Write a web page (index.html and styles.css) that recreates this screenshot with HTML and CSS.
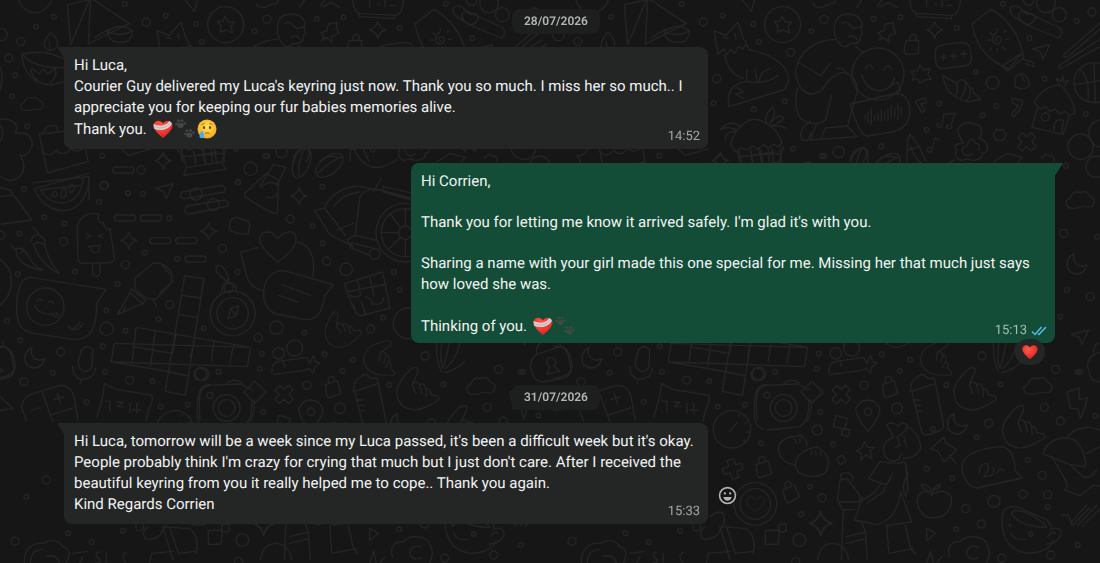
FILE: index.html
```html
<!DOCTYPE html>
<html lang="en">

<head>
    <meta charset="UTF-8">
    <meta name="viewport" content="width=device-width, initial-scale=1.0">
    <title>Chat</title>
    <link rel="stylesheet" href="styles.css">
</head>

<body>
    <!-- doodle wallpaper, one tile repeated sideways -->
    <svg class="wallpaper" aria-hidden="true">
        <defs>
            <path id="spark" d="M0-25Q5-5 24 0Q5 5 0 25Q-5 5-24 0Q-5-5 0-25Z" />
            <path id="cross" d="M-12-28L0-16L14-28L27-15L15-1L28 13L15 27L0 14L-14 27L-27 14L-14 0L-27-14Z" />
            <path id="lock" d="M-22-10L14-22L25 16L-8 29Q-16 30-18 20ZM-12-14Q-18-34-4-35Q6-35 5-19" />
            <path id="hand" d="M-60 10C-62-20-20-62-8-65Q8-66 2-50L-14-15Q-4-30 8-14Q22-22 27-1Q40-5 42 16L62 20Q74 30 56 38L30 52C-10 72-58 60-60 10ZM-14-15L-4 12M8-14L14 12M27-1L28 22" />
            <path id="moon" d="M-8-30C-42-10-34 30 0 32Q24 30 30 5Q8 14-4 0Q-14-12-8-30Z" />
            <path id="plane" d="M-27-7L25-20L5 24L-3 2Z" />
            <path id="cloud" d="M-36 22Q-52 4-30-6Q-24-30 2-22Q18-32 28-12Q52-2 36 18Q22 24 8 18Q-12 30-36 22Z" />
            <path id="heart" d="M0 32Q-54-2-30-28Q-12-38 0-16Q16-38 36-26Q50 2 0 32Z" />
            <path id="ring" d="M0-12A12 12 0 1 1 0 12A12 12 0 1 1 0-12" />
            <path id="dot" d="M0-7A7 7 0 1 1 0 7A7 7 0 1 1 0-7" />
            <path id="dash" d="M-23-9H23Q32-9 32 0T23 9H-23Q-32 9-32 0T-23-9Z" />
            <g id="doodles">
                <!-- top left -->
                <g transform="scale(.3333)">
                    <circle cx="105" cy="-12" r="50" />
                    <path d="M202 14L278-2L388 70L265 132L272-2M202 14L212 134L268 0M285 112L325 88" />
                    <path d="M322 94Q360 66 397 92Q396 130 358 127Q326 126 322 94ZM322 94Q360 114 397 92" />
                    <path d="M152 97C126 128 126 146 150 152C182 146 178 120 152 97ZM150 152L148 126" />
                    <path d="M66 162Q140 145 200 182M66 162C66 220 110 258 160 254L196 244M66 162Q110 210 196 202M110 240Q86 210 96 206L118 222Q130 196 142 222L166 206Q174 230 150 248" />
                    <use href="#cloud" x="95" y="315" transform="translate(20 60) scale(.8)" />
                    <path d="M-10 360C30 350 60 370 46 400C90 390 108 430 90 450C80 466 66 470 60 465C82 500 70 530 40 540C20 545 0 530-8 520" />
                    <path d="M130 398L142 378L168 376L176 398L200 390M118 402L248 388L264 485L142 519ZM126 452Q150 478 170 450Q190 474 212 446Q236 464 258 436" />
                    <path d="M100 548L266 530L268 600M120 570L240 556" />
                    <path d="M545 452L560 502L666 486L680 440M560 502L552 526L676 508L666 486M580 450L588 498M612 450L618 494M644 446L650 490M548 470L672 460M365 448L385 466L455 446" />
                    <ellipse cx="905" cy="488" rx="24" ry="48" transform="rotate(22 905 488)" />
                    <ellipse cx="988" cy="496" rx="26" ry="48" transform="rotate(52 988 496)" />
                    <path d="M915 445Q890 485 898 530M1025 470Q990 485 952 520M780 560L820 494L858 502L830 556M1060 440Q1100 540 1190 480" />
                    <use href="#spark" x="490" y="482" />
                    <use href="#dash" x="370" y="510" />
                    <use href="#ring" x="423" y="510" />
                    <use href="#ring" x="313" y="556" />
                    <circle cx="752" cy="506" r="20" />
                    <use href="#dot" x="802" y="468" />
                    <use href="#dot" x="714" y="547" />
                    <use href="#dot" x="307" y="467" />
                    <use href="#ring" x="62" y="125" />
                    <use href="#ring" x="26" y="174" />
                    <use href="#dot" x="108" y="80" />
                    <use href="#dot" x="162" y="50" />
                    <use href="#dot" x="46" y="226" />
                    <use href="#dot" x="36" y="289" />
                    <use href="#dot" x="82" y="379" />
                    <use href="#dot" x="374" y="12" />
                    <circle cx="4" cy="104" r="18" />
                    <path d="M-10 180Q20 230-4 280" />
                </g>

                <!-- top right -->
                <g transform="translate(143 0) scale(.3333)">
                    <path d="M54 162L42 92L78 106L114 66L128 112L146 144Q136 128 128 148L116 140L104 160L92 148L80 164L72 146ZM70 112L84 116M104 100L108 116" />
                    <path d="M74 164Q82 220 130 236M146 148C250 170 290 230 250 270L86 320C80 270 100 250 140 244Q200 256 234 226M140 212V242M165 208L172 246M178 246Q178 214 210 206M112 262L130 276L106 282L132 296" />
                    <circle cx="248" cy="74" r="54" />
                    <path d="M246 48L256 66L274 66L264 80L268 98L250 90L232 96L234 78L224 64L240 64Z" />
                    <path d="M120-10L154 34L166-8M340 10Q340 24 366 22Q390 10 402 10L410-8M470 22L490-8M532 18L550-6M540 20L566 8L590 22" />
                    <!-- man with the smiley -->
                    <path d="M406 110C396 70 410 40 446 42C484 44 490 70 484 88L488 102Q478 106 480 120Q470 134 450 130C436 150 420 140 406 110ZM426 70Q440 60 450 76T482 80M444 112Q460 100 470 118" />
                    <path d="M404 118C350 120 310 150 294 186L362 228L390 190M294 186C280 220 290 270 330 282C380 280 376 238 400 230C440 196 480 240 470 280L442 380M410 206Q430 200 442 224M466 138L490 158M292 264C280 330 290 370 350 372L376 362L394 286M350 372L330 420L472 410L442 378L376 384L362 418M332 366C310 372 296 400 306 420L322 422L334 396" />
                    <circle cx="534" cy="222" r="78" />
                    <path d="M496 206Q506 184 518 204M552 210Q566 184 574 208M484 222Q500 272 540 272Q576 268 584 232M566 262L592 246L602 270L588 284" />
                    <path d="M450 312L580 282C620 276 634 310 628 350C620 390 590 396 500 408C480 404 466 360 450 312ZM496 344V358M504 336V368M514 326V374M524 346V362M534 340V360M544 330V362M554 336V356M564 326V360M574 318V354M584 324V350M594 312V358M604 320V344" />
                    <!-- hut and palms -->
                    <path d="M92 436C100 390 140 350 176 360Q232 380 246 430L232 440L222 432L206 444L190 434L172 448L158 438L140 450L122 444L108 456ZM112 456L120 486M240 436L244 486M152 452L158 486M154 466L222 456M178 448L184 484M204 446L208 484M120 378Q90 356 62 388Q90 376 112 392Q72 396 76 420M200 374Q190 340 220 322Q230 340 208 374Q232 340 252 352Q236 372 212 378Q250 376 258 386" />
                    <path d="M46 476L60 460L78 484M450 486Q456 440 494 446Q506 466 490 486M530 486Q550 460 592 474M620 484L624 420L630 402L646 424L658 440L678 484M626 450L658 440" />
                    <!-- clock, pin, lock, shells -->
                    <path d="M630-10Q628 36 650 40L756 46Q780 44 782-8M646 40L650 50L754 56L756 46M680-4V20M706 14H710M726-4V20M740 16H756" />
                    <path d="M534 98L552 92L556 72L582 68L580 88L588 98L566 110L568 128L550 112L536 122L542 106Z" />
                    <use href="#spark" x="704" y="90" />
                    <use href="#lock" transform="translate(636 138) rotate(18)" />
                    <path d="M712 140Q740 130 790 128Q808 128 812 150L814 182Q812 196 790 198L730 206Q712 206 708 190Q702 150 712 140ZM722 172H740M731 163V181M752 168H770M761 159V177M782 162H800M791 153V171" />
                    <path d="M634 214L652 212L660 194L670 210L690 206L684 224L694 238L674 240L660 250L652 236L636 240L642 226Z" />
                    <path d="M728 226L770 250Q776 280 764 288Q738 276 728 226ZM770 250Q780 232 796 244L808 262Q820 262 820 276L842 298L820 302Q800 312 764 288M796 244Q800 276 782 294M810 262Q816 286 800 302" />
                    <path d="M816 72L872 28C920 50 960 110 968 158L926 206C880 190 828 150 816 72ZM906 198L966 160L972 172L924 214ZM968 178L1000 186L1002 200L976 190" />
                    <path d="M892 122Q884 118 890 110Q906 108 904 122Q894 140 880 126Q874 104 890 98M892 86V92M864 120H872M916 118H926M876 144L870 150M910 142L918 150M892 146V154M870 98L876 104M912 98L918 92" />
                    <path d="M932 22Q950 10 966 30L1080 84Q1092 100 1076 114L1000 84L944 52Q926 40 932 22ZM982 76Q950 60 958 40Q974 30 982 44Q1000 34 1006 54Q1000 70 982 76" />
                    <circle cx="1038" cy="10" r="28" />
                    <circle cx="1078" cy="44" r="21" />
                    <circle cx="986" cy="0" r="16" />
                    <use href="#plane" x="1024" y="154" />
                    <path d="M1078 196L1196 120M1078 196Q1072 206 1086 204L1210 134M1090 166L1200 68M1090 166Q1092 176 1106 168L1204 84" />
                    <circle cx="1182" cy="248" r="60" />
                    <path d="M1140 208Q1170 230 1164 302M1124 254L1240 236M1182 188L1186 308" />
                    <path d="M1002 306Q1040 250 1084 256Q1124 300 1124 340L1108 346L1096 334L1080 342L1066 328L1050 334L1038 320L1020 326ZM1012 324L996 382L1090 404L1108 348M1062 392Q1060 350 1090 362L1086 398M1078 256L1068 234L1084 244L1088 228L1092 246L1106 240L1094 258" />
                    <circle cx="1036" cy="351" r="12" />
                    <path d="M946 260L944 236Q956 216 974 224Q988 236 988 258Q968 274 946 260ZM962 222L974 244M646 304L676 294L680 308L662 312L676 330L666 338ZM936 296L966 300Q974 314 942 350L934 344L954 316L938 310Z" />
                    <path d="M732 342L764 340L754 376M732 342L726 374M718 370a8 6 0 1 0 8 4M746 374a8 6 0 1 0 8 2M704 414L696 450M704 414L718 420M690 444a7 6 0 1 0 6 6" />
                    <path d="M774 400C770 376 800 360 816 372C850 370 850 400 836 414C870 424 870 460 846 460C850 480 820 486 800 476C776 490 760 470 770 450C756 430 780 430 790 430ZM800 440Q812 400 826 430Q844 430 836 450M800 440Q780 440 790 460Q800 474 816 462M880 404L890 388L910 390L918 406L908 422L888 420Z" />
                    <use href="#cross" x="980" y="426" />
                    <path d="M880 486L922 460L966 472L956 486M1024 474Q1040 456 1046 468Q1066 466 1062 484" />
                    <circle cx="1142" cy="440" r="38" />
                    <circle cx="1208" cy="400" r="42" />
                    <circle cx="1190" cy="500" r="32" />
                    <circle cx="878" cy="248" r="19" />
                    <circle cx="416" cy="456" r="17" />
                    <use href="#ring" x="272" y="157" />
                    <use href="#ring" x="372" y="58" />
                    <use href="#ring" x="50" y="236" />
                    <use href="#ring" x="10" y="66" />
                    <use href="#ring" x="1176" y="36" />
                    <use href="#dot" x="68" y="47" />
                    <use href="#dot" x="160" y="72" />
                    <use href="#dot" x="177" y="126" />
                    <use href="#dot" x="334" y="94" />
                    <use href="#dot" x="521" y="57" />
                    <use href="#dot" x="602" y="52" />
                    <use href="#dot" x="770" y="84" />
                    <use href="#dot" x="909" y="11" />
                    <use href="#dot" x="988" y="114" />
                    <use href="#dot" x="1130" y="63" />
                    <use href="#dot" x="828" y="216" />
                    <use href="#dot" x="1034" y="236" />
                    <use href="#dot" x="41" y="310" />
                    <use href="#dot" x="254" y="304" />
                    <use href="#dot" x="162" y="328" />
                    <use href="#dot" x="718" y="311" />
                    <use href="#dot" x="680" y="389" />
                    <use href="#dot" x="889" y="318" />
                    <use href="#dot" x="848" y="346" />
                    <use href="#dot" x="1157" y="342" />
                    <use href="#dot" x="279" y="446" />
                    <use href="#dot" x="367" y="467" />
                    <use href="#dot" x="544" y="439" />
                    <use href="#dot" x="1098" y="497" />
                </g>

                <!-- middle -->
                <g transform="translate(0 180) scale(.3333)">
                    <path d="M-10 20L30 30L96 120L-10 134M0 50L40 46" />
                    <path d="M104 26L266-20M104 26C130 110 260 130 268-10M122 30C150 84 240 90 250-4M156 46Q160 28 172 38Q174 56 156 46M184 54Q180 26 196 26Q206 50 184 54M210 38Q202 10 218 14Q232 30 210 38" />
                    <path d="M48 206Q70 200 84 226Q100 260 128 270Q84 266 60 240Q48 226 48 206ZM100 194Q116 180 134 196Q144 240 178 282Q120 250 100 194ZM92 184Q100 160 118 166Q140 176 134 192M118 166Q110 150 98 142M50 214L34 196M60 220Q76 204 78 222" />
                    <path d="M234 240L232 140C240 100 280 96 296 104Q290 130 310 128Q316 156 330 146L344 236Q340 250 320 248L250 250Q236 250 234 240ZM278 250V280Q290 300 300 280V250M258 162L274 168L260 174M310 162L296 168L308 174M266 200L304 196M272 200Q274 224 294 216Q300 206 298 198" />
                    <path d="M546 36L664 16Q680 20 674 36L556 56Q532 54 546 36ZM560 78L672 60Q688 60 684 78L570 102Q546 104 560 78Z" />
                    <circle cx="588" cy="42" r="18" />
                    <circle cx="640" cy="74" r="18" />
                    <path d="M734 40L800-20L836 0L832 100Q820 106 734 50ZM784 24Q800 0 830 12M800 50Q820 60 834 40" />
                    <path d="M944 92L974 84C990 40 1040 16 1080 20L1130 30M944 92L990 164L1060 200L1040 180L1066 166L1080 50Q1100 20 1140 30L1230 54M974 84L1036 166M1000 80Q1030 40 1080 36M1010 150L1060 130M1120 36L1144-6M1066 166L1126 180M1050 202L1110 226M1054 188L1124 206M1150 20L1240 40L1236 60L1150 36Z" />
                    <circle cx="1216" cy="158" r="88" />
                    <circle cx="1216" cy="158" r="72" />
                    <circle cx="1216" cy="158" r="20" />
                    <path d="M1144 158H1196M1170 100L1202 144M1164 210L1202 172M1216 86V138M1216 178V230" />
                    <circle cx="1124" cy="222" r="16" />
                    <use href="#plane" x="494" y="32" />
                    <use href="#dash" x="375" y="114" />
                    <use href="#dash" x="453" y="114" />
                    <use href="#dash" x="481" y="182" />
                    <use href="#dash" x="559" y="182" />
                    <use href="#dash" x="587" y="237" />
                    <use href="#spark" x="386" y="181" />
                    <use href="#spark" x="626" y="154" />
                    <use href="#spark" x="897" y="48" />
                    <path d="M690 126Q700 108 716 114L746 124Q752 140 744 162Q700 162 688 148Z" />
                    <path d="M834 246Q780 204 778 176Q784 150 816 158L834 176Q860 144 886 162Q900 200 834 246ZM774 202L720 218C740 250 724 320 790 332M892 186C940 196 946 250 938 290" />
                    <path d="M852 272L1000 314L974 348C966 400 950 424 910 418L830 402C790 390 782 340 800 300Q820 270 852 272ZM846 314L932 346M836 346L892 366" />
                    <path d="M1034 310L1148 276L1170 384L1080 408Q1060 400 1034 310ZM1040 336L1160 312M1072 300L1082 346Q1060 356 1050 346M1110 290L1122 350M1096 350Q1120 360 1116 372Q1150 378 1152 352M1060 372L1068 400M1084 362L1096 400" />
                    <!-- glue bottle -->
                    <path d="M406 294L456 252Q486 240 514 276L516 306L470 356Q440 366 404 326ZM484 252L510 284M394 326L436 360L428 372L390 338ZM390 338L352 404L428 370M370 392L376 380M460 358L470 380M516 306L480 340" />
                    <!-- crossword -->
                    <path d="M554 288L612 296L556 646L496 634ZM546 346L604 354M536 404L594 412M408 442L752 502L742 560L334 546L342 490L752 502M408 442L396 550M528 462L518 520M466 452L452 558M584 472L572 530M642 484L634 542M700 494L690 550M508 576L566 588M400 500L514 520M334 546L396 556L512 576" />
                    <!-- compass -->
                    <circle cx="698" cy="400" r="67" />
                    <circle cx="698" cy="400" r="47" />
                    <circle cx="686" cy="324" r="14" />
                    <path d="M666 336Q664 304 690 308Q712 310 708 334M684 308L650 276Q644 250 664 258Q690 280 684 308M684 416L692 386L716 378L708 408ZM692 386L708 408" />
                    <!-- chat smiley -->
                    <path d="M92 292L318 328L290 370C290 440 276 480 220 478L100 460C50 450 50 420 50 370C54 310 70 294 92 292ZM204 438L216 450L242 426M222 448L234 448L250 430M112 364Q118 350 128 362M146 368Q152 356 162 372M104 376Q120 410 160 400M156 404L176 414M166 398L178 406" />
                    <circle cx="136" cy="380" r="56" />
                    <path d="M-10 230C20 250 36 270 34 300C34 350 10 370-10 380M-10 500Q40 490 46 560Q40 590-10 594M-10 640L40 686L-10 692" />
                    <use href="#moon" x="104" y="532" />
                    <path d="M244 510Q260 492 278 508L276 560Q266 582 244 570Q232 560 236 540ZM218 560Q220 596 248 598Q282 596 286 566M244 598L240 612" />
                    <path d="M64 680Q70 650 100 640L180 616Q214 616 222 650L234 720M126 636L158 724M64 680L80 724M96 690L120 684M150 706L220 684M160 660L192 650M172 640L182 672" />
                    <path d="M290 712L306 660L314 610Q340 630 370 632L456 646Q460 660 446 690L438 724M316 664H330V696M350 666H370L352 680H372M390 670V700M410 670V700M398 690H424" />
                    <!-- camera -->
                    <path d="M600 720C594 640 600 620 630 616L720 612L758 630M762 660Q766 700 750 724M680 612Q700 590 728 610M764 604L798 636L764 670L732 636Z" />
                    <circle cx="680" cy="684" r="40" />
                    <circle cx="680" cy="684" r="25" />
                    <circle cx="630" cy="646" r="9" />
                    <path d="M816 580Q812 550 836 544L920 532L930 550L940 526L948 546L960 548L944 562L940 580L928 566L908 572L820 584M848 540L854 560" />
                    <circle cx="836" cy="520" r="17" />
                    <circle cx="884" cy="504" r="24" />
                    <use href="#hand" transform="translate(1024 448) rotate(-15) scale(.85)" />
                    <use href="#hand" transform="translate(1146 534) rotate(30) scale(.85)" />
                    <use href="#cross" x="852" y="644" />
                    <use href="#lock" x="998" y="624" />
                    <path d="M1060 636L1136 610L1130 594L1112 596Q1096 572 1082 592Q1060 600 1060 636ZM1066 640L1094 756Q1100 768 1116 764L1150 752Q1164 744 1158 724L1136 614M1074 660H1086M1080 676H1092M1084 692H1096" />
                    <circle cx="1226" cy="430" r="46" />
                    <circle cx="1038" cy="268" r="19" />
                    <circle cx="829" cy="443" r="20" />
                    <circle cx="606" cy="582" r="20" />
                    <circle cx="320" cy="446" r="20" />
                    <use href="#ring" x="312" y="18" />
                    <use href="#ring" x="191" y="185" />
                    <use href="#ring" x="376" y="254" />
                    <use href="#ring" x="509" y="374" />
                    <use href="#ring" x="668" y="205" />
                    <use href="#ring" x="871" y="117" />
                    <use href="#ring" x="980" y="243" />
                    <use href="#ring" x="1112" y="447" />
                    <use href="#ring" x="775" y="473" />
                    <use href="#ring" x="182" y="516" />
                    <use href="#ring" x="72" y="605" />
                    <use href="#ring" x="389" y="601" />
                    <use href="#ring" x="2" y="166" />
                    <use href="#dot" x="72" y="26" />
                    <use href="#dot" x="384" y="40" />
                    <use href="#dot" x="429" y="41" />
                    <use href="#dot" x="297" y="66" />
                    <use href="#dot" x="133" y="112" />
                    <use href="#dot" x="193" y="131" />
                    <use href="#dot" x="508" y="115" />
                    <use href="#dot" x="58" y="161" />
                    <use href="#dot" x="434" y="218" />
                    <use href="#dot" x="532" y="237" />
                    <use href="#dot" x="53" y="282" />
                    <use href="#dot" x="225" y="275" />
                    <use href="#dot" x="353" y="312" />
                    <use href="#dot" x="714" y="7" />
                    <use href="#dot" x="967" y="20" />
                    <use href="#dot" x="938" y="138" />
                    <use href="#dot" x="968" y="190" />
                    <use href="#dot" x="712" y="276" />
                    <use href="#dot" x="1182" y="276" />
                    <use href="#dot" x="1199" y="330" />
                    <use href="#dot" x="1150" y="413" />
                    <use href="#dot" x="319" y="391" />
                    <use href="#dot" x="475" y="418" />
                    <use href="#dot" x="611" y="445" />
                    <use href="#dot" x="377" y="452" />
                    <use href="#dot" x="21" y="422" />
                    <use href="#dot" x="61" y="481" />
                    <use href="#dot" x="308" y="499" />
                    <use href="#dot" x="158" y="578" />
                    <use href="#dot" x="315" y="575" />
                    <use href="#dot" x="457" y="604" />
                    <use href="#dot" x="655" y="575" />
                    <use href="#dot" x="785" y="521" />
                    <use href="#dot" x="779" y="566" />
                    <use href="#dot" x="913" y="458" />
                    <use href="#dot" x="974" y="523" />
                    <use href="#dot" x="1059" y="539" />
                    <use href="#dot" x="1028" y="573" />
                    <use href="#dot" x="1168" y="615" />
                    <use href="#dot" x="260" y="666" />
                    <use href="#dot" x="482" y="680" />
                    <use href="#dot" x="563" y="674" />
                    <!-- strip beside the sent message -->
                    <use href="#plane" x="1570" y="470" />
                    <use href="#cloud" x="1570" y="60" />
                    <use href="#moon" x="1560" y="250" />
                    <use href="#ring" x="1520" y="160" />
                    <use href="#ring" x="1600" y="350" />
                    <use href="#dot" x="1530" y="330" />
                    <use href="#dot" x="1620" y="170" />
                    <use href="#dot" x="1510" y="410" />
                </g>

                <!-- bottom right -->
                <g transform="translate(143 340) scale(.3333)">
                    <path d="M192 268C160 260 160 230 164 180Q170 130 200 134M200 270L300 260Q330 240 326 180" />
                    <path d="M504 274Q466 230 468 206Q478 180 504 180Q534 182 540 212Q536 236 504 274Z" />
                    <circle cx="504" cy="215" r="11" />
                    <circle cx="591" cy="205" r="16" />
                    <circle cx="352" cy="270" r="15" />
                    <path d="M408 226L442 236L434 268L400 260ZM430 264L450 270L444 290L424 284ZM410 354L428 346L438 364L420 374ZM196 572L238 570L234 612L196 614ZM236 554L258 552L258 574L236 576ZM680 564L706 580L680 602Z" />
                    <!-- garlic -->
                    <path d="M284 374C240 370 228 330 240 310Q260 286 290 290L300 284L310 294Q326 304 318 320M284 298L290 310M300 294L300 308" />
                    <path d="M330 326C300 336 280 360 288 384C300 412 350 416 376 398C392 370 386 344 364 330L352 320L340 324ZM336 334L332 344M348 332V346M360 334L364 346" />
                    <path d="M494 304L502 322L524 322L510 334L516 356L498 344L482 360L484 340L468 332L486 324Z" />
                    <use href="#cross" transform="translate(98 387) rotate(30)" />
                    <use href="#lock" x="190" y="384" />
                    <use href="#lock" transform="translate(272 458) rotate(-8)" />
                    <circle cx="166" cy="492" r="64" />
                    <circle cx="166" cy="492" r="46" />
                    <use href="#heart" transform="translate(166 492) scale(.7)" />
                    <use href="#spark" transform="translate(362 550) scale(1.4)" />
                    <!-- woman -->
                    <path d="M556 350C544 330 552 300 580 292Q570 270 560 254Q580 240 594 260Q606 240 622 256Q620 270 606 280L596 288M622 262C650 270 666 310 660 330Q640 360 610 354M556 350Q570 370 596 358L606 340M592 290L600 316L584 324M612 290L620 320M540 364L506 416L544 430L520 460L486 482M540 364Q590 374 616 366L624 450M560 430L550 456L500 490M544 430L560 434L578 400M616 366Q630 430 618 470Q600 440 624 400M488 470L464 540L530 554Q590 540 602 456L636 546L560 556M560 556L566 634M616 556L630 620L646 644M486 548L496 576L502 660M424 660L430 510L464 508M428 510L412 480L420 420L442 416L480 468L478 486L418 486M424 416Q416 398 440 398Q464 404 458 422M440 590L496 576M440 610L498 596M566 640L640 626M352 660Q360 610 400 610Q440 616 446 660" />
                    <path d="M732 292L738 310L770 328L754 346L732 366L714 334L692 326ZM750 346L768 372" />
                    <path d="M696 466Q664 440 652 476C650 510 674 540 704 532C740 536 758 500 754 470Q730 440 696 466ZM696 466Q700 440 720 432Q720 450 700 450M696 450Q680 430 664 434Q672 454 694 454" />
                    <path d="M900 320C930 320 944 350 946 392L966 414L830 444C800 440 780 400 788 370Q800 330 900 320ZM838 400Q836 370 862 370Q872 390 850 410Q890 410 880 384M890 400Q900 380 912 392" />
                    <use href="#hand" x="822" y="148" />
                    <use href="#hand" x="968" y="262" />
                    <use href="#moon" x="772" y="250" />
                    <use href="#cloud" x="1014" y="138" />
                    <path d="M1102 156L1138 144L1136 178L1164 174L1142 236L1134 206L1112 206Z" />
                    <path d="M880 8Q880 70 896 96M966 64Q940 90 904 98M898 0Q890 50 898 84M920 0Q910 60 900 84M950 10Q940 60 906 86" />
                    <path d="M1030 342C1040 300 1090 280 1130 304Q1160 340 1156 380L1110 374ZM1056 350L1096 420Q1110 440 1092 450L1140 468L1180 436L1220 440M1110 374L1150 410Q1170 420 1190 390M1100 296C1120 260 1180 250 1210 280M1160 340L1200 320" />
                    <path d="M908 520Q920 490 960 504L1040 540Q1060 560 1050 570M908 520C900 580 920 630 980 640C1030 640 1056 620 1060 600M1058 566Q1080 560 1084 580Q1076 610 1040 612M1044 590Q1056 570 1066 580M934 520Q940 500 990 524Q1030 544 1040 562Q960 560 934 520ZM932 578Q940 604 976 598" />
                    <circle cx="992" cy="582" r="6" />
                    <circle cx="930" cy="556" r="3" />
                    <path d="M1084 524L1104 526L1114 546L1160 496M1114 546L1116 558L1168 504M1134 556L1190 496M1146 560L1200 506" />
                    <path d="M748 650C738 620 760 600 780 606C800 580 850 590 860 610Q876 640 860 669M836 622Q806 610 800 640Q806 664 836 654M680 669L692 634L700 669M710 669L726 650" />
                    <circle cx="172" cy="103" r="19" />
                    <circle cx="298" cy="600" r="19" />
                    <circle cx="882" cy="484" r="18" />
                    <use href="#ring" x="366" y="474" />
                    <use href="#ring" x="492" y="136" />
                    <use href="#ring" x="797" y="506" />
                    <use href="#ring" x="846" y="48" />
                    <use href="#ring" x="866" y="249" />
                    <use href="#ring" x="844" y="552" />
                    <use href="#ring" x="905" y="654" />
                    <use href="#ring" x="969" y="463" />
                    <use href="#ring" x="1043" y="464" />
                    <use href="#ring" x="1027" y="406" />
                    <use href="#ring" x="1033" y="202" />
                    <use href="#ring" x="1081" y="243" />
                    <use href="#ring" x="1067" y="88" />
                    <use href="#ring" x="1052" y="645" />
                    <use href="#ring" x="287" y="665" />
                    <use href="#dot" x="183" y="310" />
                    <use href="#dot" x="399" y="313" />
                    <use href="#dot" x="330" y="440" />
                    <use href="#dot" x="303" y="523" />
                    <use href="#dot" x="361" y="216" />
                    <use href="#dot" x="680" y="386" />
                    <use href="#dot" x="757" y="414" />
                    <use href="#dot" x="699" y="267" />
                    <use href="#dot" x="769" y="568" />
                    <use href="#dot" x="830" y="292" />
                    <use href="#dot" x="901" y="133" />
                    <use href="#dot" x="983" y="360" />
                    <use href="#dot" x="1043" y="501" />
                    <use href="#dot" x="1133" y="615" />
                    <use href="#dot" x="1133" y="96" />
                    <use href="#dot" x="1186" y="227" />
                </g>

                <!-- bottom left -->
                <g transform="translate(-207 340) scale(.3333)">
                    <circle cx="1146" cy="268" r="56" />
                    <path d="M1140 274L1162 248M1166 228L1170 222M1186 250L1192 246M1190 276H1198M1180 300L1186 306" />
                    <path d="M1066 560Q1040 580 1060 598Q1100 600 1110 570Q1130 550 1120 520Q1100 510 1080 530M1110 560L1190 566Q1220 590 1210 640M1110 560L1140 660M1130 562L1156 640L1210 634M1070 669L1076 640L1140 634" />
                    <path d="M694 669C690 630 720 606 750 610Q790 590 810 620Q840 630 820 669M712 669Q712 630 750 628M760 650Q790 640 800 669M840 640L884 634M860 669L870 650M920 636Q900 640 916 654T908 669M940 640V666M1000 636Q980 650 1000 669" />
                    <use href="#ring" x="666" y="604" />
                    <use href="#ring" x="1040" y="560" />
                    <use href="#dot" x="826" y="580" />
                    <use href="#dot" x="990" y="572" />
                    <use href="#dot" x="896" y="606" />
                    <use href="#dot" x="700" y="470" />
                    <use href="#ring" x="760" y="420" />
                </g>
                <g transform="translate(350 340) scale(.3333)">
                    <path d="M542 80Q540 50 570 40L630 20Q654 24 658 60L664 90Q660 110 640 114L580 126Q556 124 550 108ZM560 40Q556 20 574 8M632 20L628 4M590 102L600 80Q584 70 594 54Q616 48 618 70L612 78L630 94Z" />
                    <use href="#dot" x="519" y="95" />
                </g>
            </g>
            <pattern id="tile" width="557" height="600" patternUnits="userSpaceOnUse">
                <use href="#doodles" />
                <use href="#doodles" x="-557" />
                <use href="#doodles" x="557" />
            </pattern>

            <radialGradient id="red" cx=".4" cy=".3" r=".8">
                <stop offset="0" stop-color="#ff5a4a" />
                <stop offset="1" stop-color="#d81a1a" />
            </radialGradient>
            <radialGradient id="yellow" cx=".5" cy=".4" r=".6">
                <stop offset="0" stop-color="#ffe25a" />
                <stop offset="1" stop-color="#f5a81c" />
            </radialGradient>
            <symbol id="mending" viewBox="0 0 20 20">
                <path d="M10 19C5 15 0 10 .5 6C1 1 7 0 10 4.500C13 0 19 1 19.500 6C20 10 15 15 10 19Z" fill="url(#red)" />
                <path d="M.5 5Q5 7.500 10 6.500Q14 5.500 16.500 2L19 4.500Q17 9 11.500 10.500Q5 12 1 9.500Z" fill="#dcd3d3" />
                <path d="M1 7.500Q6 10 11 8.500Q15 7.500 18 3.500" stroke="#b9a8aa" stroke-width=".8" fill="none" />
            </symbol>
            <symbol id="paws" viewBox="0 0 20 20">
                <ellipse cx="5.500" cy="6.500" rx="3" ry="2.500" />
                <circle cx="1.500" cy="5" r="1.300" />
                <circle cx="3.500" cy="2" r="1.400" />
                <circle cx="7" cy="1.800" r="1.400" />
                <circle cx="9.500" cy="4.500" r="1.300" />
                <ellipse cx="14.500" cy="16" rx="3" ry="2.500" />
                <circle cx="10.500" cy="15" r="1.300" />
                <circle cx="12" cy="11.800" r="1.400" />
                <circle cx="15.500" cy="11.500" r="1.400" />
                <circle cx="18.500" cy="13.800" r="1.300" />
            </symbol>
            <symbol id="cry" viewBox="0 0 20 20">
                <circle cx="10" cy="10" r="9.500" fill="url(#yellow)" />
                <ellipse cx="7" cy="8.500" rx="1.100" ry="1.500" fill="#6b4216" />
                <ellipse cx="13" cy="8.500" rx="1.100" ry="1.500" fill="#6b4216" />
                <path d="M4.500 6Q5.500 5 7.500 4.500M12.500 4.500Q14.500 5 15.500 6M8 14.500Q10 13 12.500 14.500" fill="none" stroke="#8a5a1c" stroke-width=".9" />
                <path d="M5 11.500Q8.500 16 6.500 18.500Q4.500 20 2.800 18.500Q1.500 16 5 11.500Z" fill="#4fa9ea" />
            </symbol>
            <symbol id="love" viewBox="0 0 20 20">
                <path d="M10 19C5 15 0 10 .5 6C1 1 7 0 10 4.500C13 0 19 1 19.500 6C20 10 15 15 10 19Z" fill="url(#red)" />
            </symbol>
        </defs>
        <rect width="100%" height="100%" fill="url(#tile)" />
    </svg>

    <main class="chat">
        <time class="day" datetime="2026-07-28">28/07/2026</time>

        <div class="row">
            <article class="bubble received">
                <p>Hi Luca,<br>
                    Courier Guy delivered my Luca's keyring just now. Thank you so much. I miss her so much.. I appreciate you for keeping our fur babies memories alive.</p>
                <p class="emoji-line">Thank you.
                    <svg class="emoji" role="img" aria-label="mending heart"><use href="#mending" /></svg>
                    <svg class="emoji paws" role="img" aria-label="paw prints"><use href="#paws" /></svg>
                    <svg class="emoji" role="img" aria-label="crying face"><use href="#cry" /></svg>
                </p>
                <div class="meta"><time>14:52</time></div>
            </article>
        </div>

        <div class="row mine">
            <article class="bubble sent">
                <p>Hi Corrien,</p>
                <p>Thank you for letting me know it arrived safely. I'm glad it's with you.</p>
                <p>Sharing a name with your girl made this one special for me. Missing her that much just says how loved she was.</p>
                <p class="emoji-line">Thinking of you.
                    <svg class="emoji" role="img" aria-label="mending heart"><use href="#mending" /></svg>
                    <svg class="emoji paws" role="img" aria-label="paw prints"><use href="#paws" /></svg>
                </p>
                <div class="meta">
                    <time>15:13</time>
                    <svg class="ticks" viewBox="0 0 16 10" role="img" aria-label="Read">
                        <path d="M1 5.500L4 8.500L10.500 1M7 7.500L8 8.500L15 1" />
                    </svg>
                </div>
                <button class="reaction" aria-label="Reactions">
                    <svg viewBox="0 0 20 20"><use href="#love" /></svg>
                </button>
            </article>
        </div>

        <time class="day later" datetime="2026-07-31">31/07/2026</time>

        <div class="row">
            <article class="bubble received">
                <p>Hi Luca, tomorrow will be a week since my Luca passed, it's been a difficult week but it's okay. People probably think I'm crazy for crying that much but I just don't care. After I received the beautiful keyring from you it really helped me to cope.. Thank you again.<br>
                    Kind Regards Corrien</p>
                <div class="meta"><time>15:33</time></div>
            </article>
            <button class="react" aria-label="React">
                <svg viewBox="0 0 18 18">
                    <circle cx="9" cy="9" r="7.500" />
                    <path d="M5 10.500H13Q12 14 9 14T5 10.500Z" class="fill" />
                    <circle cx="6.500" cy="7" r="1.100" class="fill" />
                    <circle cx="11.500" cy="7" r="1.100" class="fill" />
                </svg>
            </button>
        </div>
    </main>
</body>

</html>
```
FILE: styles.css
```css
body {
    margin: 0;
    background-color: #161616;
    color: #f2f3f3;
    font-family: Roboto, "Liberation Sans", sans-serif;
    font-size: 15px;
    line-height: 21px;
    text-rendering: geometricPrecision;
}

.wallpaper {
    position: fixed;
    top: 0;
    left: 0;
    width: 100%;
    height: 100%;
    z-index: -1;
}

#doodles {
    fill: none;
    stroke: #242424;
    stroke-width: 4;
    stroke-linejoin: round;
    stroke-linecap: round;
}

.chat {
    display: flex;
    flex-direction: column;
    padding: 9px 45px 39px 57px;
}

.day {
    align-self: center;
    padding: 2px 12px;
    margin-bottom: 13px;
    border-radius: 8px;
    background-color: #1d1f1f;
    color: #b4b6b6;
    font-size: 12px;
    font-weight: 600;
}

.day.later {
    margin-top: 42px;
}

.row {
    display: flex;
    align-items: center;
    gap: 10px;
    padding-left: 7px;
}

.row.mine {
    justify-content: flex-end;
    margin-top: 14px;
}

.bubble {
    position: relative;
    box-sizing: border-box;
    width: 644px;
    padding: 8px 10px 9px;
    border-radius: 8px;
}

.bubble p {
    margin: 0;
}

/* little tail on the top corner */
.bubble::before {
    content: "";
    position: absolute;
    top: 0;
    width: 15px;
    height: 12px;
    background-color: inherit;
}

.received {
    background-color: #242626;
    border-top-left-radius: 0;
}

.received::before {
    left: -7px;
    clip-path: polygon(0 0, 100% 0, 100% 100%, 50% 100%);
}

.sent {
    background-color: #134d37;
    border-top-right-radius: 0;
    padding-bottom: 6px;
}

.sent::before {
    right: -8px;
    clip-path: polygon(0 0, 100% 0, 50% 100%, 0 100%);
}

.sent p + p {
    margin-top: 20px;
}

.emoji-line {
    display: flex;
    align-items: center;
    gap: 2px;
    line-height: 22px;
}

.emoji {
    width: 20px;
    height: 20px;
}

.emoji:first-child {
    margin-left: 4px;
}

.paws {
    fill: #454647;
}

.sent .paws {
    fill: #3e4a44;
}

.meta {
    position: absolute;
    right: 8px;
    bottom: 2px;
    display: flex;
    align-items: center;
    gap: 4px;
    color: #a5a7a7;
    font-size: 13px;
}

.sent .meta {
    color: #a8bdb3;
}

.ticks {
    width: 16px;
    height: 10px;
    fill: none;
    stroke: #53bdeb;
    stroke-width: 1.5;
}

button {
    display: flex;
    align-items: center;
    justify-content: center;
    padding: 0;
    border: none;
    cursor: pointer;
}

.reaction {
    position: absolute;
    right: 10px;
    bottom: -22px;
    width: 30px;
    height: 26px;
    border-radius: 13px;
    background-color: #242626;
}

.reaction svg {
    width: 16px;
    height: 16px;
}

.react {
    align-self: flex-end;
    margin-bottom: 19px;
    background: none;
}

.react svg {
    width: 19px;
    height: 19px;
    fill: none;
    stroke: #b4b6b6;
    stroke-width: 1.5;
}

.react .fill {
    fill: #b4b6b6;
    stroke: none;
}
```
